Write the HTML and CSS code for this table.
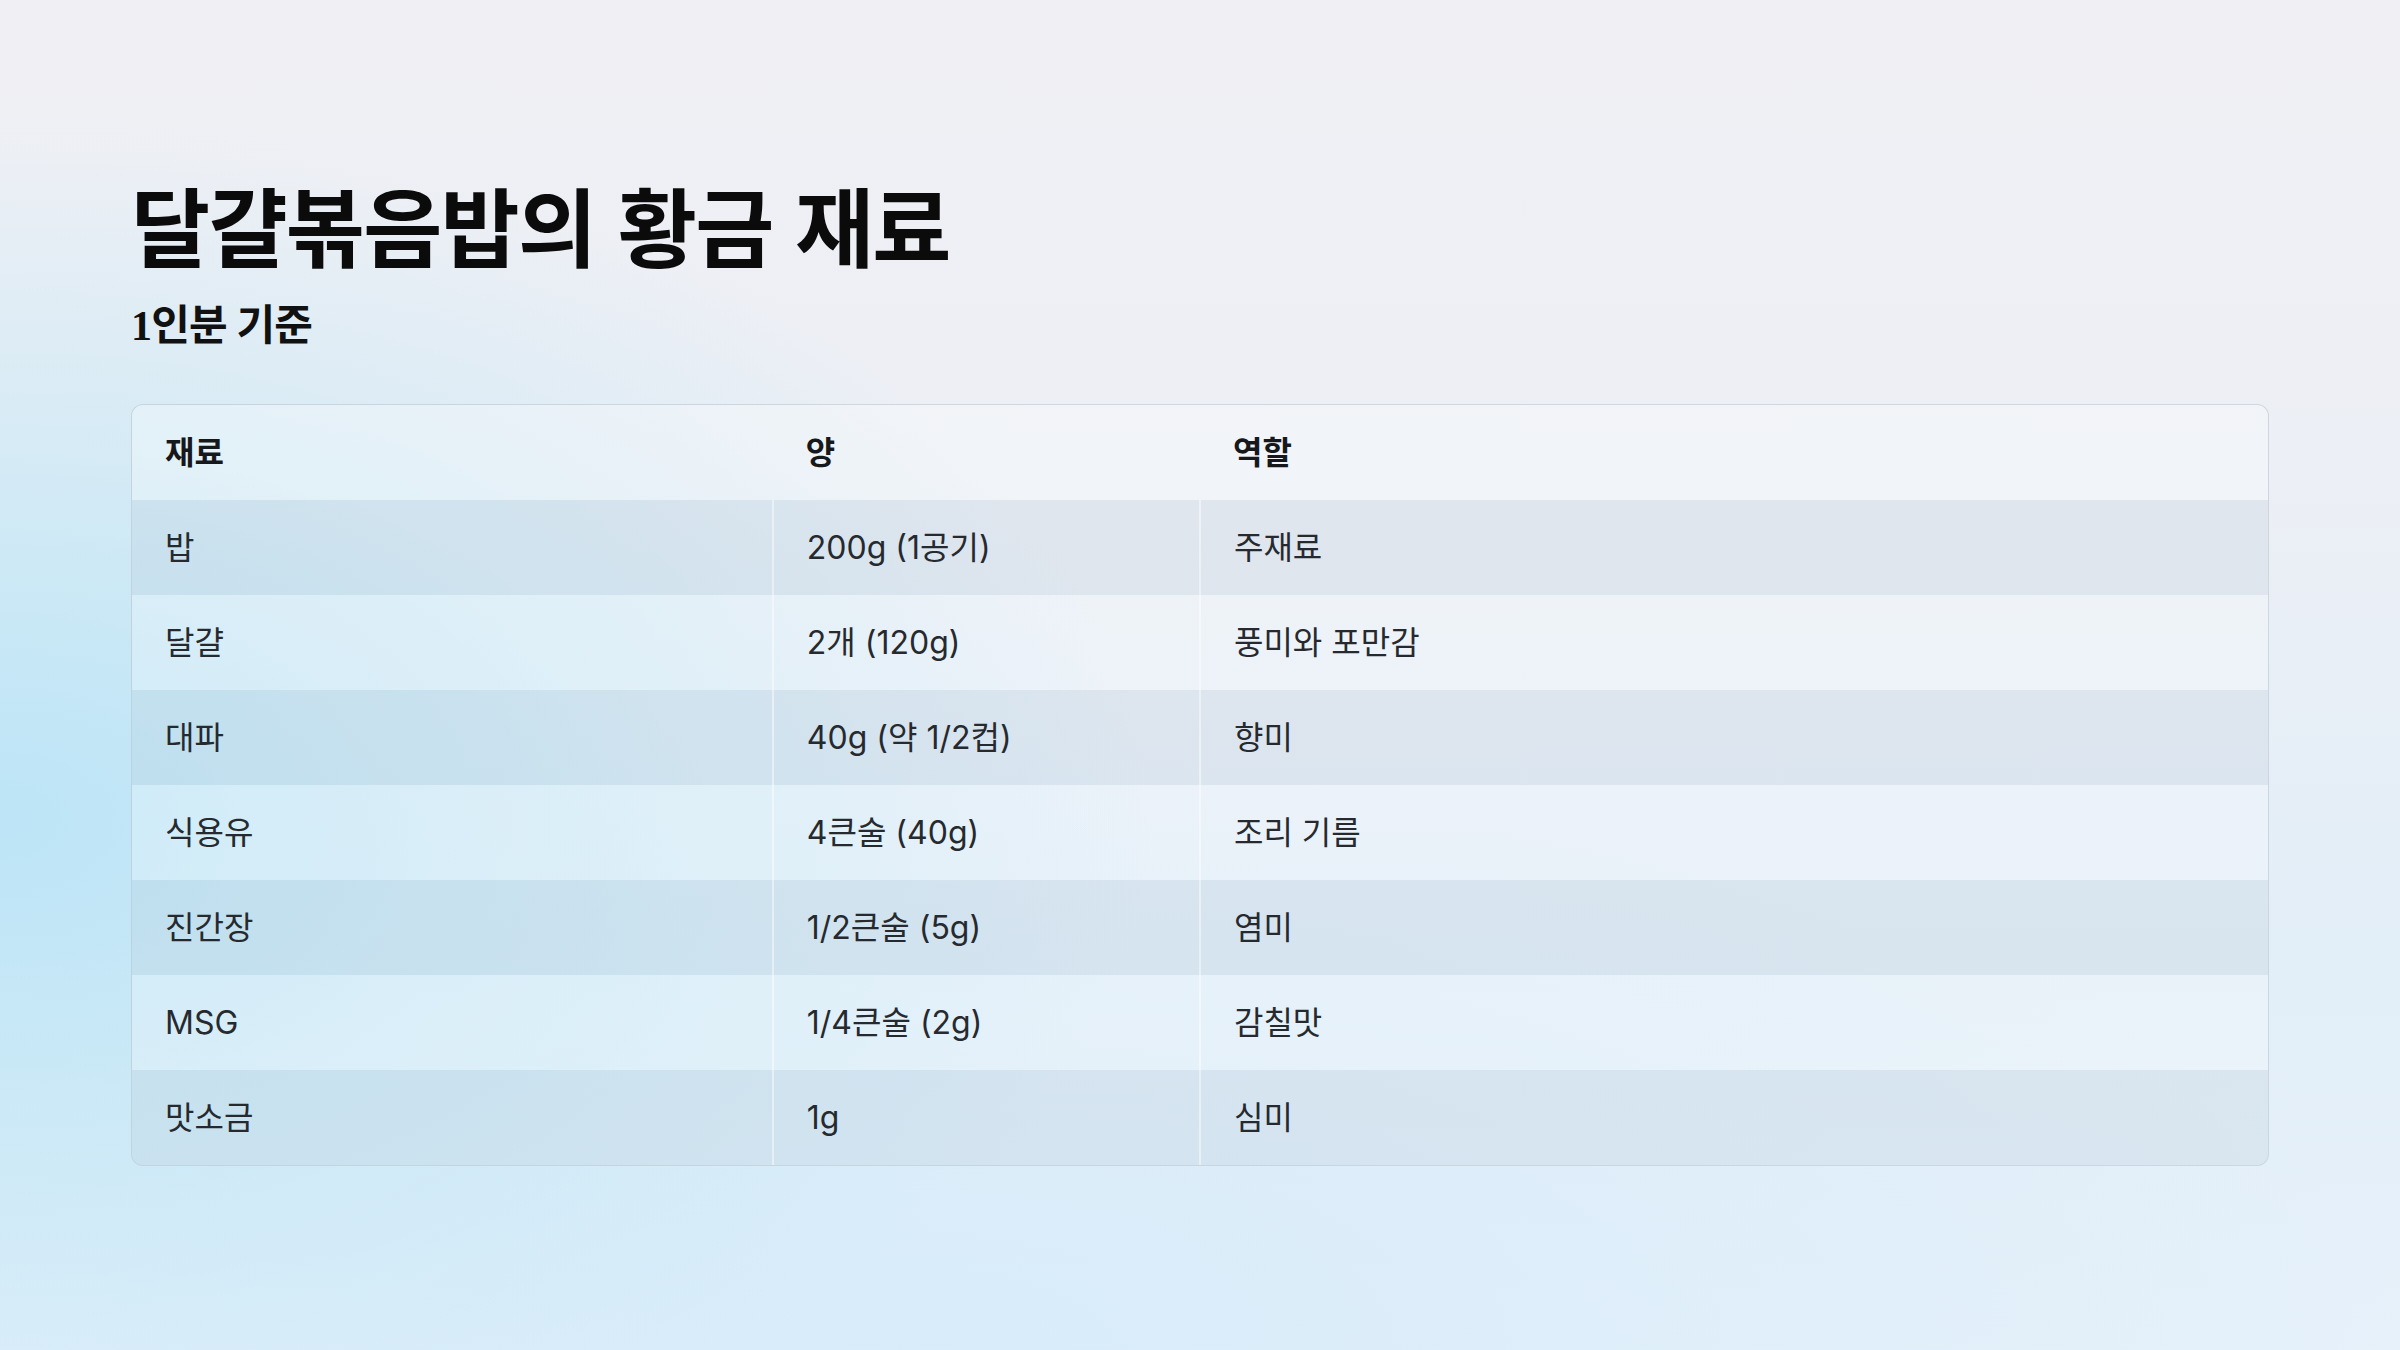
FILE: index.html
```html
<!DOCTYPE html>
<html lang="ko">
<head>
<meta charset="utf-8">
<title>달걀볶음밥의 황금 재료</title>
<link rel="stylesheet" href="styles.css">
</head>
<body>
<main class="slide">
  <header class="heading">
    <h1 class="title">달걀볶음밥의 황금 재료</h1>
    <p class="subtitle">1인분 기준</p>
  </header>
  <div class="table-wrap">
    <table class="recipe">
      <colgroup>
        <col class="c1"><col class="c2"><col class="c3">
      </colgroup>
      <thead>
        <tr><th>재료</th><th>양</th><th>역할</th></tr>
      </thead>
      <tbody>
        <tr><td>밥</td><td>200g (1공기)</td><td>주재료</td></tr>
        <tr><td>달걀</td><td>2개 (120g)</td><td>풍미와 포만감</td></tr>
        <tr><td>대파</td><td>40g (약 1/2컵)</td><td>향미</td></tr>
        <tr><td>식용유</td><td>4큰술 (40g)</td><td>조리 기름</td></tr>
        <tr><td>진간장</td><td>1/2큰술 (5g)</td><td>염미</td></tr>
        <tr><td>MSG</td><td>1/4큰술 (2g)</td><td>감칠맛</td></tr>
        <tr><td>맛소금</td><td>1g</td><td>심미</td></tr>
      </tbody>
    </table>
  </div>
</main>
</body>
</html>
```

FILE: styles.css
```css
html, body {
  margin: 0;
  padding: 0;
}
body {
  width: 2400px;
  height: 1350px;
  overflow: hidden;
  font-family: Inter, "Noto Sans CJK KR", sans-serif;
  color: #1f2328;
  background:
    radial-gradient(ellipse 1150px 700px at 0px 820px, rgba(186, 228, 246, 0.95) 0%, rgba(195, 231, 246, 0.65) 45%, rgba(210, 236, 248, 0) 100%),
    radial-gradient(ellipse 1500px 600px at 900px 1350px, rgba(214, 235, 249, 0.9) 0%, rgba(214, 235, 249, 0) 100%),
    linear-gradient(180deg, #f0f0f4 0%, #eceff5 35%, #e2eef8 70%, #e6f1fa 100%);
}
.slide {
  box-sizing: border-box;
  height: 100%;
  padding: 172px 131px 0 131px;
  display: flex;
  flex-direction: column;
}
.heading {
  display: flex;
  flex-direction: column;
}
.title {
  margin: 0;
  font-family: "Noto Sans CJK KR", sans-serif;
  font-weight: 700;
  font-size: 86px;
  line-height: 1.2;
  letter-spacing: -0.02em;
  color: #0b0b0c;
}
.subtitle {
  margin: 24px 0 0 0;
  font-family: "Liberation Serif", "Noto Sans CJK KR", serif;
  font-weight: 700;
  font-size: 42px;
  line-height: 1.3;
  letter-spacing: -0.02em;
  color: #111;
}
.table-wrap {
  margin-top: 50px;
  border: 1px solid rgba(170, 182, 196, 0.45);
  border-radius: 12px;
  overflow: hidden;
  background: rgba(255, 255, 255, 0.12);
}
.recipe {
  width: 100%;
  border-collapse: collapse;
  table-layout: fixed;
  font-size: 32px;
}
.c1 { width: 30%; }
.c2 { width: 20%; }
.c3 { width: 50%; }
.recipe th,
.recipe td {
  text-align: left;
  padding: 25px 33px;
  line-height: 45px;
  height: 45px;
}
.recipe th {
  font-weight: 700;
  color: #16181b;
  background: rgba(255, 255, 255, 0.22);
}
.recipe td {
  font-weight: 400;
  color: #262a2f;
}
.recipe td + td {
  border-left: 2px solid rgba(255, 255, 255, 0.45);
}
.recipe tbody tr:nth-child(odd) td {
  background: rgba(120, 150, 175, 0.11);
}
.recipe tbody tr:nth-child(even) td {
  background: rgba(255, 255, 255, 0.16);
}
```
